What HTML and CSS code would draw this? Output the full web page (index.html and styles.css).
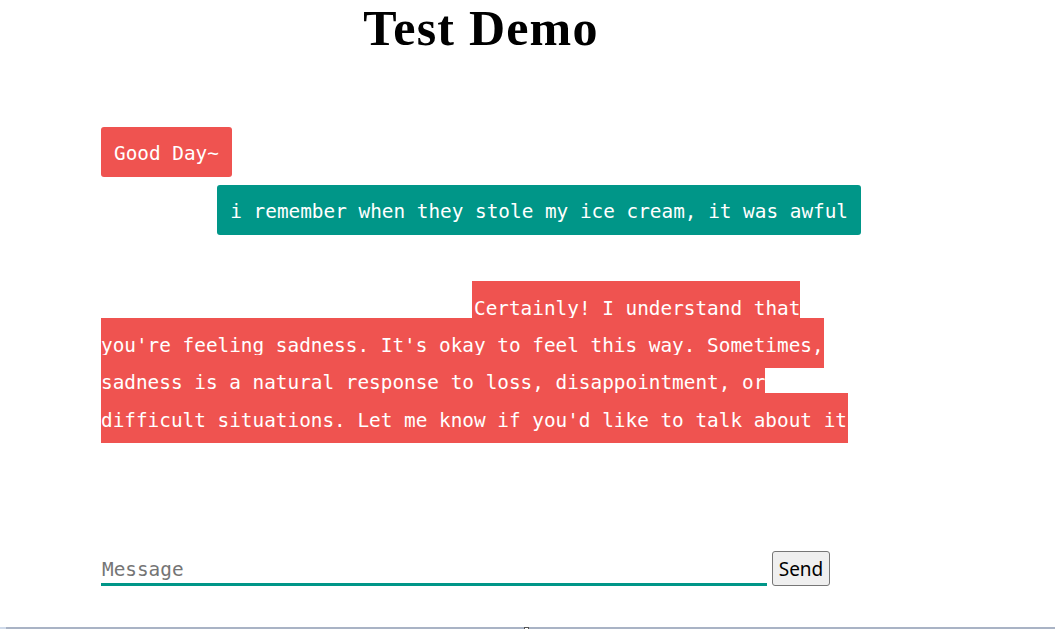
FILE: index.html
```
<!DOCTYPE html>
<html lang="en">
<head>
<meta charset="utf-8">
<title>Test Demo</title>
<link rel="stylesheet" href="styles.css">
</head>
<body>
<div class="app">
  <h1 class="title">Test Demo</h1>
  <div class="chat">
    <div class="row row-bot"><span class="bubble bubble-bot">Good Day~</span></div>
    <div class="row row-user"><span class="bubble bubble-user">i remember when they stole my ice cream, it was awful</span></div>
    <div class="row-long"><span class="long">Certainly! I understand that you're feeling sadness. It's okay to feel this way. Sometimes, sadness is a natural response to loss, disappointment, or difficult situations. Let me know if you'd like to talk about it</span></div>
  </div>
  <form class="composer" onsubmit="return false;">
    <input class="composer-input" type="text" placeholder="Message">
    <button class="send" type="submit">Send</button>
  </form>
</div>
<div class="statusbar"><div class="statusbar-track"><span class="statusbar-thumb"></span></div></div>
</body>
</html>
```
FILE: styles.css
```
html {
  overflow: hidden;
}
body {
  margin: 0;
  background: #fff;
}
.app {
  width: 946px;
  margin-left: 8px;
}
.title {
  margin: 0;
  padding-top: 3px;
  font: bold 50px/50px "Liberation Serif", serif;
  letter-spacing: 1.2px;
  text-align: center;
  color: #000;
}
.chat {
  margin: 74px 0 0 93px;
  width: 760px;
  font-family: "DejaVu Sans Mono", monospace;
  font-size: 19.38px;
  color: #fff;
}
.row {
  display: flex;
}
.row-user {
  justify-content: flex-end;
  margin-top: 8px;
}
.bubble {
  display: inline-block;
  padding: 14px 13px 10px;
  line-height: 26px;
  border-radius: 3px;
  white-space: nowrap;
}
.bubble-bot {
  background: #ef5350;
}
.bubble-user {
  background: #009688;
}
.row-long {
  margin-top: 54.65px;
  text-indent: 371px;
  line-height: 37.3px;
}
.long {
  background: #ef5350;
  padding: 16px 1px 11px 2px;
}
.composer {
  display: flex;
  align-items: flex-end;
  gap: 5px;
  margin: 112.15px 0 0 93px;
}
.composer-input {
  width: 666px;
  box-sizing: border-box;
  border: 0;
  border-bottom: 3px solid #009688;
  padding: 0 1px 2px;
  margin: 0;
  font-family: "DejaVu Sans Mono", monospace;
  font-size: 19.38px;
  line-height: normal;
  background: transparent;
  outline: none;
  color: #000;
}
.composer-input::placeholder {
  color: #757575;
}
.send {
  width: 58px;
  height: 35px;
  box-sizing: border-box;
  margin: 0;
  padding: 1px 0 0;
  border: 1px solid #767676;
  border-radius: 3px;
  background: #efefef;
  color: #000;
  font-family: "Noto Sans", "Open Sans", sans-serif;
  font-size: 19px;
}
.statusbar {
  margin-top: 41px;
  height: 2px;
  padding-left: 6px;
  background: #cfdaea;
}
.statusbar-track {
  position: relative;
  height: 2px;
  background: #a9b3c5;
}
.statusbar-thumb {
  position: absolute;
  left: 518px;
  top: 0;
  width: 5px;
  height: 2px;
  box-sizing: border-box;
  border: 1px solid #555;
  border-bottom: 0;
  background: #fff;
}
```
